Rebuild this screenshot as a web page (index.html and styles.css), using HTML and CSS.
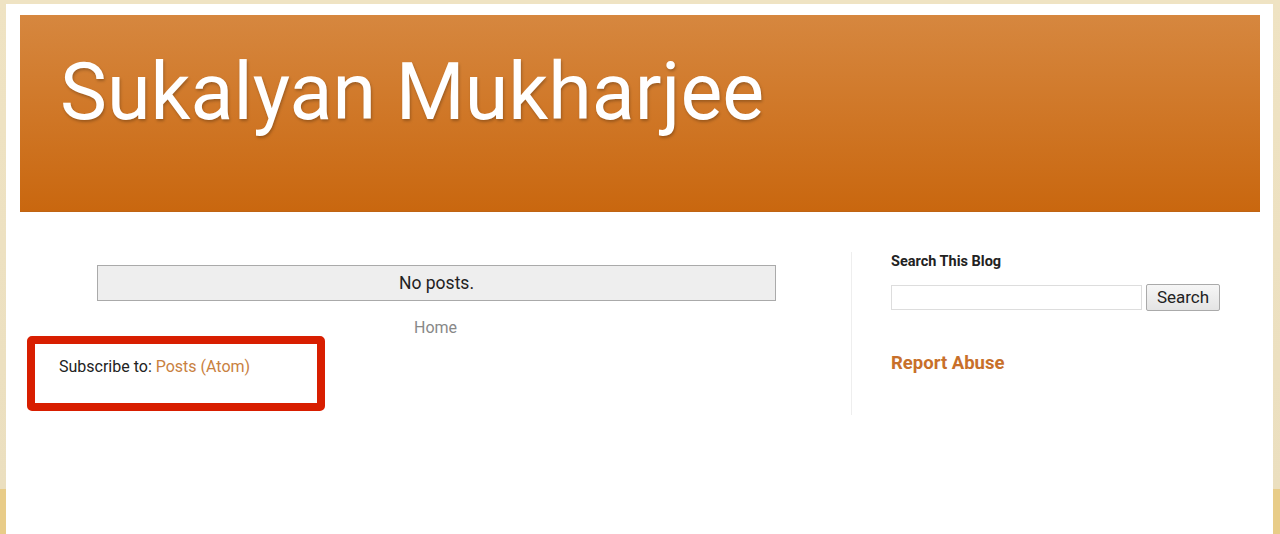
FILE: index.html
```html
<!DOCTYPE html>
<html>
<head>
  <link rel="stylesheet" href="styles.css">
</head>
<body>
  <div class="page">
    <div class="header">
      <h1 class="title">Sukalyan Mukharjee</h1>
    </div>

    <div class="content">
      <div class="main">
        <div class="status-msg">No posts.</div>
        <div class="home-link"><a href="#">Home</a></div>
        <div class="feed-links">
          Subscribe to: <a href="#">Posts (Atom)</a>
        </div>
      </div>

      <div class="sidebar">
        <h2 class="widget-title">Search This Blog</h2>
        <form class="search-form" onsubmit="return false">
          <input type="text" class="search-input">
          <button type="submit" class="search-btn">Search</button>
        </form>
        <h3 class="report"><a href="#">Report Abuse</a></h3>
      </div>
    </div>
  </div>
</body>
</html>
```

FILE: styles.css
```css
body {
  margin: 0;
  font-family: Roboto, "Liberation Sans", sans-serif;
  color: #222;
  background: linear-gradient(#efe3c3 0, #ebdfbf 489px, #e8cc88 489px, #e8cc88 100%);
  min-height: 534px;
}
a {
  text-decoration: none;
}
.page {
  margin: 4px 7px 0 6px;
  background: #fff;
  min-height: 530px;
  padding: 11px 13px 0 14px;
}
.header {
  height: 197px;
  background: linear-gradient(#d6873f, #c9670f);
  border-bottom: 1px solid #bf6414;
  box-sizing: border-box;
  padding: 38px 40px 0 40px;
}
.title {
  margin: 0;
  font-size: 79px;
  font-weight: 400;
  line-height: 1;
  color: #fff;
  text-shadow: 1px 2px 3px rgba(0, 0, 0, 0.25);
}
.content {
  display: flex;
  padding-top: 40px;
}
.main {
  width: 832px;
  border-right: 1px solid #eee;
  height: 163px;
  box-sizing: border-box;
}
.status-msg {
  margin: 13px 75px 0 77px;
  background: #eee;
  border: 1px solid #aaa;
  padding: 7px 0;
  text-align: center;
  font-size: 17.5px;
  line-height: 20px;
}
.home-link {
  text-align: center;
  margin-top: 19px;
  font-size: 16px;
  line-height: 16px;
}
.home-link a {
  color: #888;
}
.feed-links {
  margin: 0 0 0 7px;
  width: 298px;
  height: 75px;
  box-sizing: border-box;
  border: 8px solid #d81e00;
  border-radius: 5px;
  padding: 13px 0 0 24px;
  font-size: 16px;
  line-height: 20px;
}
.feed-links a {
  color: #c9813f;
}
.sidebar {
  padding-left: 39px;
}
.widget-title {
  margin: 0;
  padding-top: 1px;
  font-size: 14.5px;
  font-weight: 700;
  line-height: 18px;
  color: #222;
}
.search-form {
  display: flex;
  align-items: center;
  gap: 4px;
  margin-top: 13px;
}
.search-input {
  width: 251px;
  height: 25px;
  box-sizing: border-box;
  border: 1px solid #ddd;
  padding: 2px 4px;
}
.search-btn {
  width: 74px;
  height: 27px;
  font-family: Roboto, "Liberation Sans", sans-serif;
  font-size: 17px;
  line-height: 25px;
  color: #222;
  background: linear-gradient(#f6f6f6, #e4e4e4);
  border: 1px solid #aaa;
  border-radius: 2px;
  padding: 0 0 2px 0;
}
.report {
  margin: 41px 0 0 0;
  font-size: 18.5px;
  font-weight: 700;
  line-height: 22px;
}
.report a {
  color: #c8702a;
}
```
